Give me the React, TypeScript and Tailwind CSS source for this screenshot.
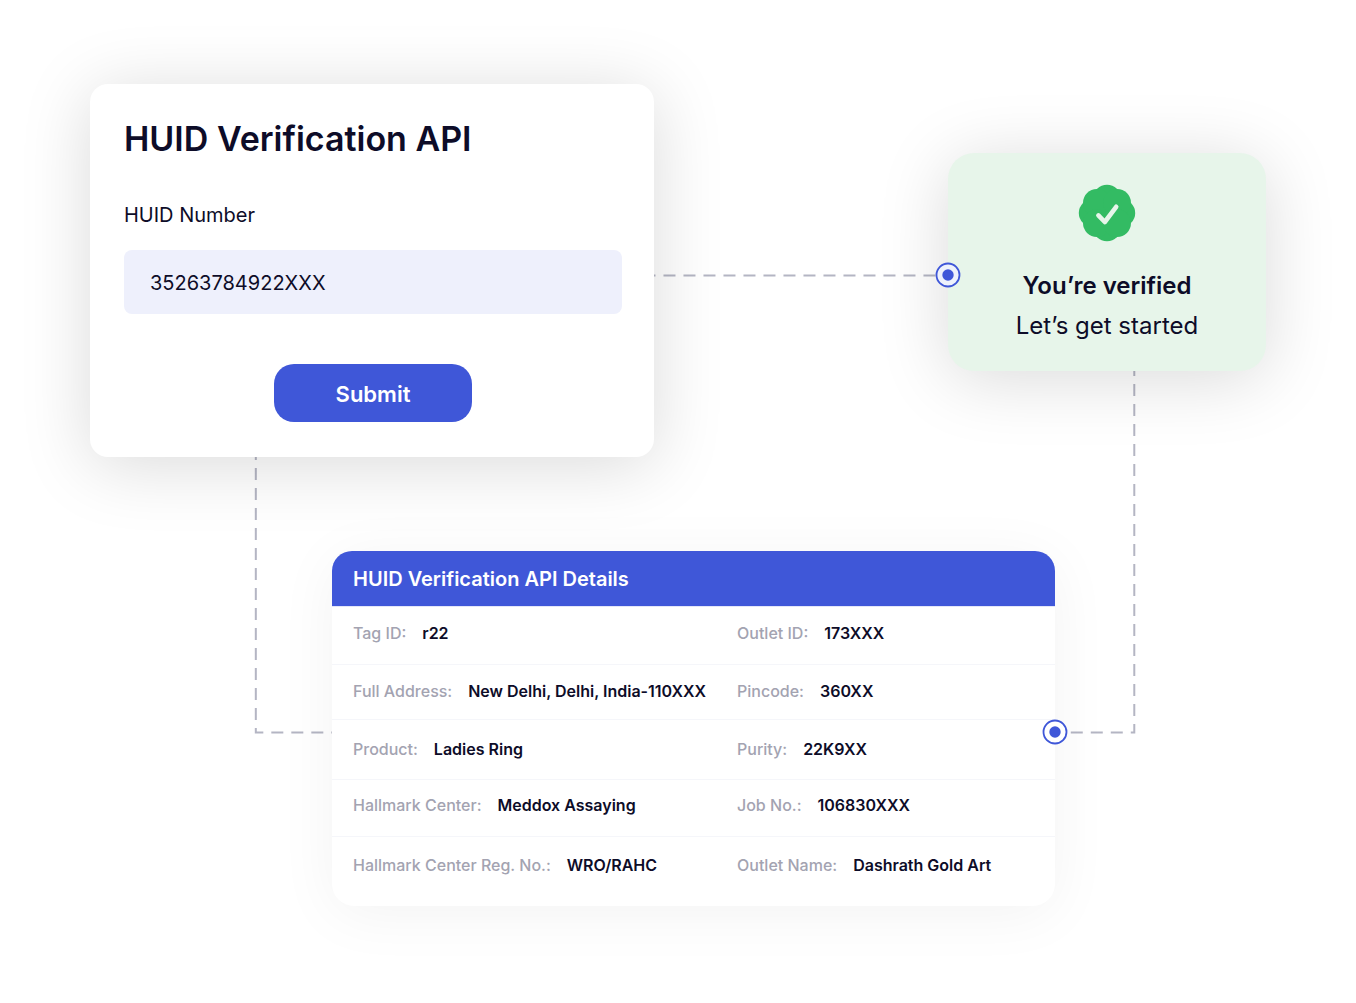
import type { ReactNode } from "react";

interface Detail {
  label: string;
  value: string;
}

interface DetailRow {
  className: string;
  items: Detail[];
}

const detailRows: DetailRow[] = [
  {
    className: "h-[58px] pb-1.5",
    items: [
      { label: "Tag ID:", value: "r22" },
      { label: "Outlet ID:", value: "173XXX" },
    ],
  },
  {
    className: "h-[55px] pb-0.5",
    items: [
      { label: "Full Address:", value: "New Delhi, Delhi, India-110XXX" },
      { label: "Pincode:", value: "360XX" },
    ],
  },
  {
    className: "h-[60px] pb-0.5",
    items: [
      { label: "Product:", value: "Ladies Ring" },
      { label: "Purity:", value: "22K9XX" },
    ],
  },
  {
    className: "h-[57px] pb-1.5",
    items: [
      { label: "Hallmark Center:", value: "Meddox Assaying" },
      { label: "Job No.:", value: "106830XXX" },
    ],
  },
  {
    className: "h-[69px] pb-3.5",
    items: [
      { label: "Hallmark Center Reg. No.:", value: "WRO/RAHC" },
      { label: "Outlet Name:", value: "Dashrath Gold Art" },
    ],
  },
];

const VerifiedBadge = () => (
  <svg viewBox="0 0 58 58" className="size-[58px]" aria-hidden="true">
    <g fill="#33bb63">
      <circle cx="29" cy="14.7" r="13.9" />
      <circle cx="29" cy="43.3" r="13.9" />
      <circle cx="14.7" cy="29" r="13.9" />
      <circle cx="43.3" cy="29" r="13.9" />
      <circle cx="18.9" cy="18.9" r="13.9" />
      <circle cx="39.1" cy="18.9" r="13.9" />
      <circle cx="18.9" cy="39.1" r="13.9" />
      <circle cx="39.1" cy="39.1" r="13.9" />
    </g>
    <path
      d="M20.4 31.4l6.4 6.6L38.2 22.8"
      fill="none"
      stroke="#e7f5ea"
      strokeWidth="4.6"
      strokeLinecap="round"
      strokeLinejoin="round"
    />
  </svg>
);

const ConnectorDot = ({ className, fill }: { className: string; fill: string }) => (
  <svg viewBox="0 0 26 26" className={`absolute size-[26px] ${className}`} aria-hidden="true">
    <circle cx="13" cy="13" r="11.5" fill={fill} stroke="#3f57d8" strokeWidth="1.8" />
    <circle cx="13" cy="13" r="5.7" fill="#3f57d8" />
  </svg>
);

// Dashed lines run behind the cards, so they can end anywhere underneath them.
const Connectors = () => (
  <svg
    className="absolute inset-0 h-full w-full overflow-visible"
    fill="none"
    stroke="#b4b5c3"
    strokeWidth="2"
    strokeDasharray="12 8"
    aria-hidden="true"
  >
    <svg x="73%" className="overflow-visible">
      <path d="M-13 191.5H-400" />
    </svg>
    <svg x="88.8%" className="overflow-visible">
      <path d="M0 280V648.5H-110" />
    </svg>
    <svg x="14.1%" className="overflow-visible">
      <path d="M0 364V648.5H110" />
    </svg>
  </svg>
);

const Card = ({ className, children }: { className: string; children: ReactNode }) => (
  <section className={`relative ${className}`}>{children}</section>
);

export default function App() {
  return (
    <main className="min-h-screen bg-white px-[90px] pt-[84px] pb-24 font-[Inter,sans-serif] text-[#0d0c28]">
      <div className="relative">
        <Connectors />

        <div className="grid grid-cols-[564fr_294fr_318fr] items-start">
          <Card className="h-[373px] rounded-[18px] bg-white pt-8 pr-8 pl-[34px] shadow-[0_8px_70px_rgba(0,0,0,0.15)]">
            <h1 className="text-[34px] leading-[46px] font-semibold whitespace-nowrap">HUID Verification API</h1>
            <form onSubmit={(e) => e.preventDefault()} className="flex flex-col pt-[38px]">
              <label htmlFor="huid" className="text-[20px] leading-[30px]">
                HUID Number
              </label>
              <input
                id="huid"
                type="text"
                defaultValue="35263784922XXX"
                className="mt-5 h-16 w-full rounded-lg bg-[#eef0fc] px-[26px] pt-0.5 text-[20px] outline-none"
              />
              <button
                type="submit"
                className="mt-[50px] h-[58px] w-[198px] self-center rounded-[20px] bg-[#3f57d8] pt-0.5 text-[22px] font-semibold text-white"
              >
                Submit
              </button>
            </form>
          </Card>

          <Card className="col-start-3 mt-[69px] flex h-[218px] flex-col items-center rounded-[26px] bg-[#e7f5ea] pt-[31px] text-[24px] leading-10 whitespace-nowrap shadow-[0_8px_70px_rgba(0,0,0,0.15)]">
            <VerifiedBadge />
            <h2 className="mt-6 font-semibold">You’re verified</h2>
            <p>Let’s get started</p>
            <ConnectorDot className="top-[109px] -left-[13px]" fill="#eef2fc" />
          </Card>
        </div>

        <div className="grid grid-cols-[242fr_723fr_211fr] pt-[94px]">
          <Card className="col-start-2 rounded-[22px] bg-white shadow-[0_8px_60px_rgba(0,0,0,0.05)]">
            <h2 className="h-[55px] rounded-t-[20px] bg-[#3f57d8] px-[21px] text-[20px] leading-[57px] font-semibold text-white">
              HUID Verification API Details
            </h2>
            <dl className="border-t border-[#e3e6f8] text-[16px] leading-6 whitespace-nowrap">
              {detailRows.map((row) => (
                <div
                  key={row.items[0].label}
                  className={`grid grid-cols-[384fr_318fr] items-center border-b border-[#f5f6fa] pl-[21px] last:border-b-0 ${row.className}`}
                >
                  {row.items.map((item) => (
                    <div key={item.label} className="flex gap-4">
                      <dt className="font-medium text-[#a3a3b1]">{item.label}</dt>
                      <dd className="font-semibold">{item.value}</dd>
                    </div>
                  ))}
                </div>
              ))}
            </dl>
            <ConnectorDot className="top-[168px] -right-[13px]" fill="#ffffff" />
          </Card>
        </div>
      </div>
    </main>
  );
}
